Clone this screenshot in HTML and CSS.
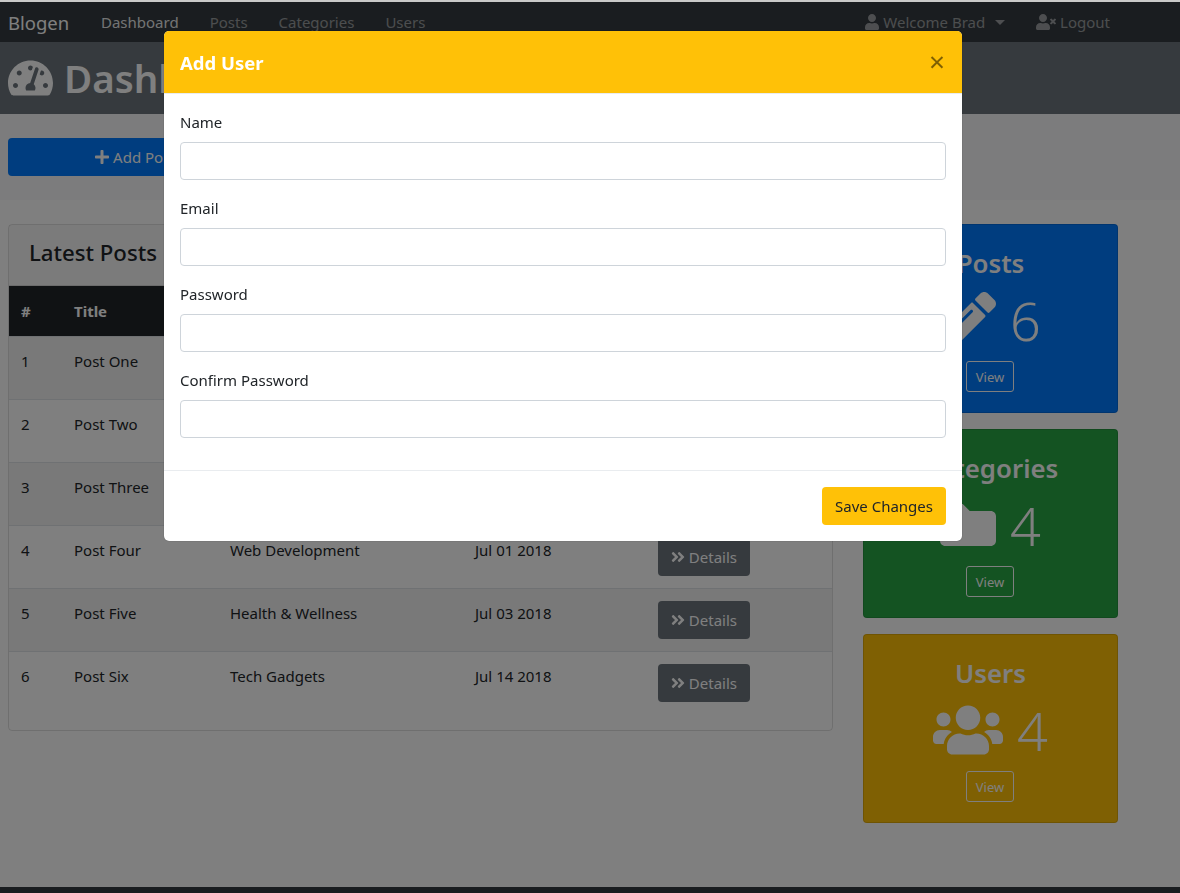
FILE: index.html
```html
<!DOCTYPE html>
<html lang="en">
<head>
  <meta charset="UTF-8" />
  <meta name="viewport" content="width=device-width, initial-scale=1" />
  <title>Blogen - Dashboard</title>
  <link rel="stylesheet" href="styles.css">
</head>
<body>
  <nav class="navbar">
    <a class="brand" href="#">Blogen</a>
    <ul class="nav-list">
      <li><a class="nav-link active" href="#">Dashboard</a></li>
      <li><a class="nav-link" href="#">Posts</a></li>
      <li><a class="nav-link" href="#">Categories</a></li>
      <li><a class="nav-link" href="#">Users</a></li>
    </ul>
    <ul class="nav-list nav-right">
      <li>
        <a class="nav-link" href="#">
          <svg class="icon" viewBox="0 0 448 512"><path d="M224 256c70.7 0 128-57.3 128-128S294.7 0 224 0 96 57.3 96 128s57.3 128 128 128zm89.6 32h-16.7c-22.2 10.2-46.9 16-72.9 16s-50.6-5.8-72.9-16h-16.7C60.2 288 0 348.2 0 422.4V464c0 26.5 21.5 48 48 48h352c26.5 0 48-21.5 48-48v-41.6c0-74.2-60.2-134.4-134.4-134.4z"/></svg>
          Welcome Brad <span class="caret"></span>
        </a>
      </li>
      <li>
        <a class="nav-link" href="#">
          <svg class="icon" viewBox="0 0 640 512"><path d="M224 256c70.7 0 128-57.3 128-128S294.7 0 224 0 96 57.3 96 128s57.3 128 128 128zm89.6 32h-16.7c-22.2 10.2-46.9 16-72.9 16s-50.6-5.8-72.9-16h-16.7C60.2 288 0 348.2 0 422.4V464c0 26.5 21.5 48 48 48h352c26.5 0 48-21.5 48-48v-41.6c0-74.2-60.2-134.4-134.4-134.4zM589.6 240l45.6-45.6c6.3-6.3 6.3-16.5 0-22.8l-22.8-22.8c-6.3-6.3-16.5-6.3-22.8 0L544 194.4l-45.6-45.6c-6.3-6.3-16.5-6.3-22.8 0l-22.8 22.8c-6.3 6.3-6.3 16.5 0 22.8l45.6 45.6-45.6 45.6c-6.3 6.3-6.3 16.5 0 22.8l22.8 22.8c6.3 6.3 16.5 6.3 22.8 0l45.6-45.6 45.6 45.6c6.3 6.3 16.5 6.3 22.8 0l22.8-22.8c6.3-6.3 6.3-16.5 0-22.8L589.6 240z"/></svg>
          Logout
        </a>
      </li>
    </ul>
  </nav>

  <header class="page-header">
    <h1>
      <svg class="icon" viewBox="0 0 576 512"><path d="M288 32C128.94 32 0 160.94 0 320c0 52.8 14.25 102.26 39.06 144.8 5.61 9.62 16.3 15.2 27.44 15.2h443c11.14 0 21.83-5.58 27.44-15.2C561.75 422.26 576 372.8 576 320c0-159.06-128.94-288-288-288zm0 64c14.71 0 26.58 10.13 30.32 23.65-1.11 2.26-2.64 4.23-3.45 6.67l-9.22 27.67c-5.13 3.49-10.97 6.01-17.64 6.01-17.67 0-32-14.33-32-32S270.33 96 288 96zM96 384c-17.67 0-32-14.33-32-32s14.33-32 32-32 32 14.33 32 32-14.33 32-32 32zm48-160c-17.67 0-32-14.33-32-32s14.33-32 32-32 32 14.33 32 32-14.33 32-32 32zm246.77-72.41l-61.33 184C343.13 347.33 352 364.54 352 384c0 11.72-3.38 22.55-8.88 32H232.88c-5.5-9.45-8.88-20.28-8.88-32 0-33.94 26.5-61.43 59.9-63.59l61.34-184.01c4.17-12.56 17.73-19.45 30.36-15.17 12.57 4.19 19.35 17.79 15.17 30.36zm14.66 57.2l15.52-46.55c3.47-1.29 7.13-2.23 11.05-2.23 17.67 0 32 14.33 32 32s-14.33 32-32 32c-11.38-.01-20.89-6.28-26.57-15.22zM480 384c-17.67 0-32-14.33-32-32s14.33-32 32-32 32 14.33 32 32-14.33 32-32 32z"/></svg>
      Dashboard
    </h1>
  </header>

  <section class="actions">
    <a class="btn btn-block btn-primary" href="#">
      <svg class="icon" viewBox="0 0 448 512"><path d="M416 208H272V64c0-17.67-14.33-32-32-32h-32c-17.67 0-32 14.33-32 32v144H32c-17.67 0-32 14.33-32 32v32c0 17.67 14.33 32 32 32h144v144c0 17.67 14.33 32 32 32h32c17.67 0 32-14.33 32-32V304h144c17.67 0 32-14.33 32-32v-32c0-17.67-14.33-32-32-32z"/></svg>
      Add Post
    </a>
    <a class="btn btn-block btn-success" href="#">Add Category</a>
    <a class="btn btn-block btn-warning" href="#">Add User</a>
  </section>

  <main class="content">
    <div class="posts-card">
      <div class="posts-header"><h4>Latest Posts</h4></div>
      <table class="posts-table">
        <thead>
          <tr>
            <th class="col-id">#</th>
            <th class="col-title">Title</th>
            <th class="col-cat">Category</th>
            <th class="col-date">Date Posted</th>
            <th></th>
          </tr>
        </thead>
        <tbody>
          <tr>
            <td>1</td><td>Post One</td><td>Web Development</td><td>May 10 2018</td>
            <td><a class="btn btn-secondary" href="#"><svg class="icon" viewBox="0 0 448 512"><path d="M224.3 273l-136 136c-9.4 9.4-24.6 9.4-33.9 0l-22.6-22.6c-9.4-9.4-9.4-24.6 0-33.9l96.4-96.4-96.4-96.4c-9.4-9.4-9.4-24.6 0-33.9L54.3 103c9.4-9.4 24.6-9.4 33.9 0l136 136c9.5 9.4 9.5 24.6.1 34zm192-34l-136-136c-9.4-9.4-24.6-9.4-33.9 0l-22.6 22.6c-9.4 9.4-9.4 24.6 0 33.9l96.4 96.4-96.4 96.4c-9.4 9.4-9.4 24.6 0 33.9l22.6 22.6c9.4 9.4 24.6 9.4 33.9 0l136-136c9.4-9.2 9.4-24.4 0-33.8z"/></svg> Details</a></td>
          </tr>
          <tr>
            <td>2</td><td>Post Two</td><td>Tech Gadgets</td><td>May 12 2018</td>
            <td><a class="btn btn-secondary" href="#"><svg class="icon" viewBox="0 0 448 512"><path d="M224.3 273l-136 136c-9.4 9.4-24.6 9.4-33.9 0l-22.6-22.6c-9.4-9.4-9.4-24.6 0-33.9l96.4-96.4-96.4-96.4c-9.4-9.4-9.4-24.6 0-33.9L54.3 103c9.4-9.4 24.6-9.4 33.9 0l136 136c9.5 9.4 9.5 24.6.1 34zm192-34l-136-136c-9.4-9.4-24.6-9.4-33.9 0l-22.6 22.6c-9.4 9.4-9.4 24.6 0 33.9l96.4 96.4-96.4 96.4c-9.4 9.4-9.4 24.6 0 33.9l22.6 22.6c9.4 9.4 24.6 9.4 33.9 0l136-136c9.4-9.2 9.4-24.4 0-33.8z"/></svg> Details</a></td>
          </tr>
          <tr>
            <td>3</td><td>Post Three</td><td>Business</td><td>Jun 05 2018</td>
            <td><a class="btn btn-secondary" href="#"><svg class="icon" viewBox="0 0 448 512"><path d="M224.3 273l-136 136c-9.4 9.4-24.6 9.4-33.9 0l-22.6-22.6c-9.4-9.4-9.4-24.6 0-33.9l96.4-96.4-96.4-96.4c-9.4-9.4-9.4-24.6 0-33.9L54.3 103c9.4-9.4 24.6-9.4 33.9 0l136 136c9.5 9.4 9.5 24.6.1 34zm192-34l-136-136c-9.4-9.4-24.6-9.4-33.9 0l-22.6 22.6c-9.4 9.4-9.4 24.6 0 33.9l96.4 96.4-96.4 96.4c-9.4 9.4-9.4 24.6 0 33.9l22.6 22.6c9.4 9.4 24.6 9.4 33.9 0l136-136c9.4-9.2 9.4-24.4 0-33.8z"/></svg> Details</a></td>
          </tr>
          <tr>
            <td>4</td><td>Post Four</td><td>Web Development</td><td>Jul 01 2018</td>
            <td><a class="btn btn-secondary" href="#"><svg class="icon" viewBox="0 0 448 512"><path d="M224.3 273l-136 136c-9.4 9.4-24.6 9.4-33.9 0l-22.6-22.6c-9.4-9.4-9.4-24.6 0-33.9l96.4-96.4-96.4-96.4c-9.4-9.4-9.4-24.6 0-33.9L54.3 103c9.4-9.4 24.6-9.4 33.9 0l136 136c9.5 9.4 9.5 24.6.1 34zm192-34l-136-136c-9.4-9.4-24.6-9.4-33.9 0l-22.6 22.6c-9.4 9.4-9.4 24.6 0 33.9l96.4 96.4-96.4 96.4c-9.4 9.4-9.4 24.6 0 33.9l22.6 22.6c9.4 9.4 24.6 9.4 33.9 0l136-136c9.4-9.2 9.4-24.4 0-33.8z"/></svg> Details</a></td>
          </tr>
          <tr>
            <td>5</td><td>Post Five</td><td>Health &amp; Wellness</td><td>Jul 03 2018</td>
            <td><a class="btn btn-secondary" href="#"><svg class="icon" viewBox="0 0 448 512"><path d="M224.3 273l-136 136c-9.4 9.4-24.6 9.4-33.9 0l-22.6-22.6c-9.4-9.4-9.4-24.6 0-33.9l96.4-96.4-96.4-96.4c-9.4-9.4-9.4-24.6 0-33.9L54.3 103c9.4-9.4 24.6-9.4 33.9 0l136 136c9.5 9.4 9.5 24.6.1 34zm192-34l-136-136c-9.4-9.4-24.6-9.4-33.9 0l-22.6 22.6c-9.4 9.4-9.4 24.6 0 33.9l96.4 96.4-96.4 96.4c-9.4 9.4-9.4 24.6 0 33.9l22.6 22.6c9.4 9.4 24.6 9.4 33.9 0l136-136c9.4-9.2 9.4-24.4 0-33.8z"/></svg> Details</a></td>
          </tr>
          <tr>
            <td>6</td><td>Post Six</td><td>Tech Gadgets</td><td>Jul 14 2018</td>
            <td><a class="btn btn-secondary" href="#"><svg class="icon" viewBox="0 0 448 512"><path d="M224.3 273l-136 136c-9.4 9.4-24.6 9.4-33.9 0l-22.6-22.6c-9.4-9.4-9.4-24.6 0-33.9l96.4-96.4-96.4-96.4c-9.4-9.4-9.4-24.6 0-33.9L54.3 103c9.4-9.4 24.6-9.4 33.9 0l136 136c9.5 9.4 9.5 24.6.1 34zm192-34l-136-136c-9.4-9.4-24.6-9.4-33.9 0l-22.6 22.6c-9.4 9.4-9.4 24.6 0 33.9l96.4 96.4-96.4 96.4c-9.4 9.4-9.4 24.6 0 33.9l22.6 22.6c9.4 9.4 24.6 9.4 33.9 0l136-136c9.4-9.2 9.4-24.4 0-33.8z"/></svg> Details</a></td>
          </tr>
        </tbody>
      </table>
    </div>

    <aside class="stats">
      <div class="stat-card stat-primary">
        <h3>Posts</h3>
        <div class="stat-value">
          <svg class="icon" viewBox="0 0 512 512"><path d="M497.9 142.1l-46.1 46.1c-4.7 4.7-12.3 4.7-17 0l-111-111c-4.7-4.7-4.7-12.3 0-17l46.1-46.1c18.7-18.7 49.1-18.7 67.9 0l60.1 60.1c18.8 18.7 18.8 49.1 0 67.9zM284.2 99.8L21.6 362.4.4 483.9c-2.9 16.4 11.4 30.6 27.8 27.8l121.5-21.3 262.6-262.6c4.7-4.7 4.7-12.3 0-17l-111-111c-4.8-4.7-12.4-4.7-17.1 0zM124.1 339.9c-5.5-5.5-5.5-14.3 0-19.8l154-154c5.5-5.5 14.3-5.5 19.8 0s5.5 14.3 0 19.8l-154 154c-5.5 5.5-14.3 5.5-19.8 0zM88 424h48v36.3l-64.5 11.3-31.1-31.1L51.7 376H88v48z"/></svg>
          6
        </div>
        <a class="btn-view" href="#">View</a>
      </div>
      <div class="stat-card stat-success">
        <h3>Categories</h3>
        <div class="stat-value">
          <svg class="icon" viewBox="0 0 512 512"><path d="M464 128H272l-64-64H48C21.49 64 0 85.49 0 112v288c0 26.51 21.49 48 48 48h416c26.51 0 48-21.49 48-48V176c0-26.51-21.49-48-48-48z"/></svg>
          4
        </div>
        <a class="btn-view" href="#">View</a>
      </div>
      <div class="stat-card stat-warning">
        <h3>Users</h3>
        <div class="stat-value">
          <svg class="icon" viewBox="0 0 640 512"><path d="M96 224c35.3 0 64-28.7 64-64s-28.7-64-64-64-64 28.7-64 64 28.7 64 64 64zm448 0c35.3 0 64-28.7 64-64s-28.7-64-64-64-64 28.7-64 64 28.7 64 64 64zm32 32h-64c-17.6 0-33.5 7.1-45.1 18.6 40.3 22.1 68.9 62 75.1 109.4h66c17.7 0 32-14.3 32-32v-32c0-35.3-28.7-64-64-64zm-256 0c61.9 0 112-50.1 112-112S381.9 32 320 32 208 82.1 208 144s50.1 112 112 112zm76.8 32h-8.3c-20.8 10-43.9 16-68.5 16s-47.6-6-68.5-16h-8.3C179.6 288 128 339.6 128 403.2V432c0 26.5 21.5 48 48 48h288c26.5 0 48-21.5 48-48v-28.8c0-63.6-51.6-115.2-115.2-115.2zm-223.7-13.4C161.5 263.1 145.6 256 128 256H64c-35.3 0-64 28.7-64 64v32c0 17.7 14.3 32 32 32h65.9c6.3-47.4 34.9-87.3 75.2-109.4z"/></svg>
          4
        </div>
        <a class="btn-view" href="#">View</a>
      </div>
    </aside>
  </main>

  <footer class="page-footer"></footer>

  <div class="backdrop"></div>

  <div class="modal">
    <div class="modal-header">
      <h5>Add User</h5>
      <button class="close" type="button">&times;</button>
    </div>
    <form class="modal-body">
      <div class="form-group">
        <label for="name">Name</label>
        <input type="text" id="name" />
      </div>
      <div class="form-group">
        <label for="email">Email</label>
        <input type="email" id="email" />
      </div>
      <div class="form-group">
        <label for="password">Password</label>
        <input type="password" id="password" />
      </div>
      <div class="form-group">
        <label for="confirm">Confirm Password</label>
        <input type="password" id="confirm" />
      </div>
    </form>
    <div class="modal-footer">
      <button class="btn btn-warning" type="button">Save Changes</button>
    </div>
  </div>
</body>
</html>
```

FILE: styles.css
```css
html {
  overflow: hidden;
}

body {
  margin: 0;
  height: 100vh;
  box-sizing: border-box;
  display: flex;
  flex-direction: column;
  border-top: 2px solid #c9c9c9;
  font-family: "Noto Sans", "Open Sans", sans-serif;
  font-size: 15px;
  line-height: 24px;
  color: #212529;
  background: #fff;
}

a {
  text-decoration: none;
  color: inherit;
}

.icon {
  height: 16px;
  fill: currentColor;
  vertical-align: -2px;
}

/* Top navbar */
.navbar {
  display: flex;
  align-items: center;
  height: 40px;
  padding: 0 62px 0 8px;
  background: #343a40;
  flex-shrink: 0;
}

.brand {
  width: 61px;
  margin-right: 16.5px;
  padding-top: 1px;
  font-size: 18.5px;
  color: #fff;
}

.nav-list {
  display: flex;
  list-style: none;
  margin: 0;
  padding: 0;
}

.nav-right {
  margin-left: auto;
}

.nav-link {
  display: block;
  padding: 8px 15.5px;
  color: rgba(255, 255, 255, 0.5);
}

.nav-link.active {
  color: rgba(255, 255, 255, 0.9);
}

.nav-right .nav-link {
  padding: 8px;
}

.nav-right li + li {
  margin-left: 15px;
}

.caret {
  display: inline-block;
  margin-left: 6px;
  vertical-align: 3px;
  border-top: 5px solid;
  border-left: 5px solid transparent;
  border-right: 5px solid transparent;
}

/* Page header */
.page-header {
  height: 72px;
  box-sizing: border-box;
  padding: 12px 8px;
  background: #6c757d;
  color: #fff;
  flex-shrink: 0;
}

.page-header h1 {
  margin: 0;
  font-size: 38.5px;
  line-height: 48px;
  font-weight: 600;
}

.page-header .icon {
  height: 40px;
  margin-right: 1px;
  vertical-align: -5px;
}

.actions {
  display: grid;
  grid-template-columns: repeat(3, 255px);
  gap: 30px;
  padding: 24px 8px;
  background: #f8f9fa;
  flex-shrink: 0;
}

/* Buttons */
.btn {
  display: inline-block;
  padding: 7px 12px;
  border: 1px solid transparent;
  border-radius: 4px;
  font: inherit;
  line-height: 22px;
  height: 38px;
  box-sizing: border-box;
  text-align: center;
  cursor: pointer;
}

.btn-block {
  display: block;
}

.btn-primary {
  background: #007bff;
  color: #fff;
}

.btn-success {
  background: #28a745;
  color: #fff;
}

.btn-warning {
  background: #ffc107;
  color: #212529;
}

.btn-secondary {
  background: #6c757d;
  color: #fff;
}

/* Main content */
.content {
  display: grid;
  grid-template-columns: 825px 255px;
  gap: 30px;
  align-items: start;
  padding: 24px 8px 64px;
  flex-shrink: 0;
}

.posts-card {
  border: 1px solid rgba(0, 0, 0, 0.125);
  border-radius: 4px;
  padding-bottom: 16px;
}

.posts-header {
  height: 61px;
  box-sizing: border-box;
  padding: 10px 20px;
  background: rgba(0, 0, 0, 0.03);
  border-bottom: 1px solid rgba(0, 0, 0, 0.125);
}

.posts-header h4 {
  margin: 0;
  font-size: 22.2px;
  line-height: 36px;
  font-weight: 500;
}

.posts-table {
  width: 100%;
  border-collapse: collapse;
  table-layout: fixed;
}

.posts-table th,
.posts-table td {
  padding: 12px;
  text-align: left;
  vertical-align: top;
}

.posts-table th {
  padding-top: 13px;
  padding-bottom: 11px;
  background: #212529;
  color: #fff;
  font-weight: 700;
  height: 26px;
}

.posts-table td {
  border-top: 1px solid #dee2e6;
}

.posts-table tbody tr:nth-child(odd) {
  background: rgba(0, 0, 0, 0.05);
}

.posts-table .btn {
  display: block;
  width: 92px;
  padding-left: 0;
  padding-right: 0;
}

.col-id {
  width: 29px;
}

.col-title {
  width: 132px;
}

.col-cat {
  width: 221px;
}

.col-date {
  width: 159px;
}

/* Side stat cards */
.stats {
  display: flex;
  flex-direction: column;
  gap: 16px;
}

.stat-card {
  height: 189px;
  box-sizing: border-box;
  padding: 20px;
  border: 1px solid rgba(0, 0, 0, 0.125);
  border-radius: 4px;
  color: #fff;
  text-align: center;
}

.stat-primary {
  background: #007bff;
}

.stat-success {
  background: #28a745;
}

.stat-warning {
  background: #ffc107;
}

.stat-card h3 {
  margin: 1px 0 7px;
  font-size: 25.8px;
  line-height: 34px;
  font-weight: 600;
}

.stat-value {
  margin-bottom: 8px;
  font-size: 54px;
  line-height: 66px;
  font-weight: 300;
}

.stat-value .icon {
  height: 56px;
  vertical-align: -7px;
}

.btn-view {
  display: inline-block;
  height: 31px;
  width: 48px;
  margin-right: 1px;
  box-sizing: border-box;
  border: 1px solid #fff;
  border-radius: 3px;
  font-size: 13px;
  line-height: 30px;
}

.page-footer {
  flex: 1;
  background: #343a40;
}

/* Modal */
.backdrop {
  position: fixed;
  top: 2px;
  left: 0;
  right: 0;
  bottom: 0;
  background: rgba(0, 0, 0, 0.5);
}

.modal {
  position: fixed;
  top: 31px;
  left: 164px;
  width: 798px;
  box-sizing: border-box;
  background: #fff;
  border-radius: 5px;
  overflow: hidden;
  box-shadow: 0 0 1px rgba(0, 0, 0, 0.6);
}

.modal-header {
  display: flex;
  justify-content: space-between;
  align-items: center;
  height: 63px;
  box-sizing: border-box;
  padding: 1px 17px 0 16px;
  background: #ffc107;
  border-bottom: 1px solid #e9ecef;
  color: #fff;
}

.modal-header h5 {
  margin: 0;
  font-size: 18.5px;
  line-height: 30px;
  font-weight: 700;
}

.close {
  padding: 0 0 3px;
  border: none;
  background: none;
  font-family: inherit;
  font-size: 28px;
  line-height: 24px;
  font-weight: 400;
  color: #000;
  opacity: 0.5;
  cursor: pointer;
}

.modal-body {
  padding: 16px;
}

.form-group {
  margin-bottom: 16px;
}

.form-group label {
  display: block;
  margin-bottom: 8px;
}

.form-group input {
  display: block;
  width: 100%;
  height: 38px;
  box-sizing: border-box;
  border: 1px solid #ced4da;
  border-radius: 4px;
}

.modal-footer {
  display: flex;
  justify-content: flex-end;
  padding: 16px;
  border-top: 1px solid #e9ecef;
}

.modal-footer .btn {
  width: 124px;
  padding-left: 0;
  padding-right: 0;
}
```
